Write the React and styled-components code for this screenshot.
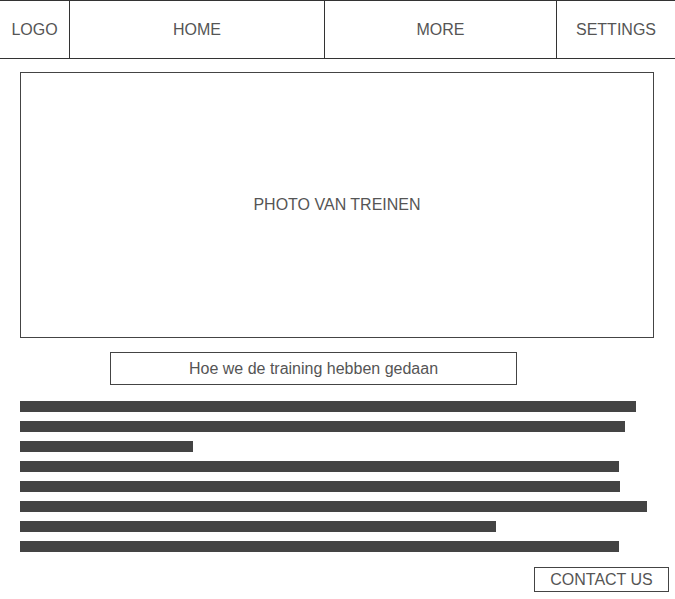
import React from "react";
import styled, { createGlobalStyle } from "styled-components";

const GlobalStyle = createGlobalStyle`
  body {
    margin: 0;
    background: #fff;
    font-family: "Liberation Sans", Arial, sans-serif;
  }
`;

const Page = styled.div`
  width: 675px;
  height: 599px;
  overflow: hidden;
  background: #fff;
`;

const Nav = styled.nav`
  display: grid;
  grid-template-columns: 69px 255px 232px 1fr;
  height: 57px;
  border-top: 1px solid #333;
  border-bottom: 1px solid #333;
`;

const NavItem = styled.div`
  display: flex;
  align-items: center;
  justify-content: center;
  font-size: 16px;
  color: #555;
  border-left: ${({ $first }) => ($first ? "none" : "1px solid #333")};
`;

const Content = styled.main`
  display: flex;
  flex-direction: column;
  padding: 13px 0 0 20px;
`;

const Photo = styled.div`
  width: 632px;
  height: 264px;
  border: 1px solid #444;
  display: flex;
  align-items: center;
  justify-content: center;
  font-size: 16px;
  color: #555;
`;

const Caption = styled.div`
  margin: 14px 0 0 90px;
  width: 405px;
  height: 31px;
  border: 1px solid #444;
  display: flex;
  align-items: center;
  justify-content: center;
  font-size: 16px;
  color: #555;
`;

const Lines = styled.div`
  display: flex;
  flex-direction: column;
  gap: 9px;
  margin-top: 16px;
`;

const Line = styled.div`
  height: 11px;
  background: #444;
`;

const Footer = styled.div`
  display: flex;
  justify-content: flex-end;
  padding: 15px 6px 0 0;
`;

const ContactButton = styled.button`
  width: 135px;
  height: 25px;
  border: 1px solid #444;
  background: #fff;
  font-family: "Liberation Sans", Arial, sans-serif;
  font-size: 16px;
  color: #555;
  padding: 1px 0 0;
  cursor: pointer;
`;

const lineWidths = [616, 605, 173, 599, 600, 627, 476, 599];

const App = () => {
  return (
    <Page>
      <GlobalStyle />
      <Nav>
        <NavItem $first>LOGO</NavItem>
        <NavItem>HOME</NavItem>
        <NavItem>MORE</NavItem>
        <NavItem>SETTINGS</NavItem>
      </Nav>
      <Content>
        <Photo>PHOTO VAN TREINEN</Photo>
        <Caption>Hoe we de training hebben gedaan</Caption>
        <Lines>
          {lineWidths.map((w, i) => (
            <Line key={i} style={{ width: w }} />
          ))}
        </Lines>
      </Content>
      <Footer>
        <ContactButton>CONTACT US</ContactButton>
      </Footer>
    </Page>
  );
};

export default App;
